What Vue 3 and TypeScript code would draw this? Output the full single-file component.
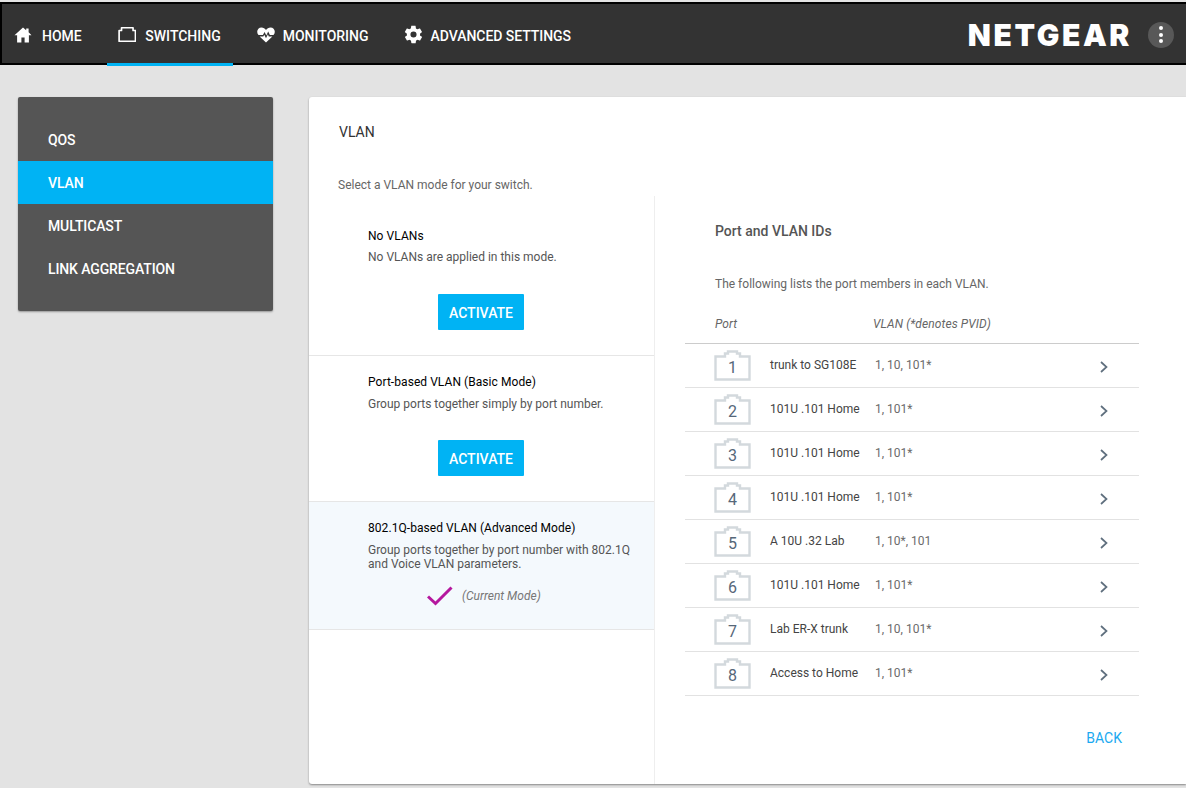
<script setup lang="ts">
interface PortRow { id: number; name: string; vlans: string }
const ports: PortRow[] = [
  { id: 1, name: 'trunk to SG108E', vlans: '1, 10, 101*' },
  { id: 2, name: '101U .101 Home', vlans: '1, 101*' },
  { id: 3, name: '101U .101 Home', vlans: '1, 101*' },
  { id: 4, name: '101U .101 Home', vlans: '1, 101*' },
  { id: 5, name: 'A 10U .32 Lab', vlans: '1, 10*, 101' },
  { id: 6, name: '101U .101 Home', vlans: '1, 101*' },
  { id: 7, name: 'Lab ER-X trunk', vlans: '1, 10, 101*' },
  { id: 8, name: 'Access to Home', vlans: '1, 101*' },
]
const side = ['QOS', 'VLAN', 'MULTICAST', 'LINK AGGREGATION']
</script>

<template>
  <div class="page">
    <header class="top">
      <nav class="nav">
        <a class="tab home">
          <svg class="i-home" width="18" height="16" viewBox="0 0 18 16"><path fill="#fff" d="M9 .5 .5 8.200h2.600V15.500h4.300v-5h3.200v5h4.300V8.200h2.600L14.600 5.300V1.500h-2.400v1.700z" /></svg>
          HOME
        </a>
        <a class="tab active">
          <svg class="i-switch" width="20" height="17" viewBox="0 0 20 17"><path fill="none" stroke="#fff" stroke-width="1.800" stroke-linejoin="round" d="M1.200 15.800V4.200h2.600V1.200h12.400v3h2.600V15.800z" /></svg>
          SWITCHING
        </a>
        <a class="tab mon">
          <svg class="i-heart" width="18" height="16" viewBox="0 0 18 16"><path fill="#fff" d="M9 15.600 2.600 9.400h3.700l1-1.700 1.700 3.600 1.900-4 .9 2.100h3.600zM1.500 8.100C.6 7.100.2 6 .2 4.800.2 2.400 2 .4 4.500.4 6.300.4 8 1.300 9 2.900 10 1.300 11.700.4 13.500.4c2.500 0 4.300 2 4.300 4.400 0 1.200-.4 2.300-1.300 3.300h-3.600l-1.700-3.600-1.900 4-1.700-3.600-1.700 3.200z" /></svg>
          MONITORING
        </a>
        <a class="tab adv">
          <svg class="i-gear" width="21" height="21" viewBox="0 0 24 24"><path fill="#fff" d="M19.400 13c.1-.3.1-.7.1-1s0-.7-.1-1l2.100-1.600c.2-.2.2-.4.100-.6l-2-3.500c-.1-.2-.4-.3-.6-.2l-2.500 1c-.5-.4-1.100-.7-1.700-1l-.4-2.600c0-.3-.2-.5-.5-.5h-4c-.3 0-.5.2-.5.400l-.4 2.700c-.6.2-1.200.6-1.700 1l-2.500-1c-.2-.1-.5 0-.6.2l-2 3.500c-.1.200-.1.400.1.600L4.500 11c0 .3-.1.700-.1 1s0 .7.1 1l-2.100 1.600c-.2.200-.2.400-.1.600l2 3.500c.1.200.4.300.6.200l2.500-1c.5.400 1.100.7 1.700 1l.4 2.600c0 .3.200.5.500.5h4c.3 0 .5-.2.500-.4l.4-2.700c.6-.2 1.200-.6 1.700-1l2.500 1c.2.100.5 0 .6-.2l2-3.500c.1-.2.100-.4-.1-.6zM12 15.500a3.500 3.500 0 1 1 0-7 3.500 3.500 0 0 1 0 7z" /></svg>
          ADVANCED SETTINGS
        </a>
      </nav>
      <div class="brand">
        <span class="logo">NETGEAR</span>
        <span class="more"><i></i><i></i><i></i></span>
      </div>
    </header>

    <div class="body">
      <aside class="side">
        <a v-for="s in side" :key="s" class="side-item" :class="{ on: s === 'VLAN' }">{{ s }}</a>
      </aside>

      <main class="panel">
        <h1 class="title">VLAN</h1>
        <p class="lead">Select a VLAN mode for your switch.</p>
        <div class="cols">
          <section class="modes">
            <div class="mode m1">
              <h2>No VLANs</h2>
              <p>No VLANs are applied in this mode.</p>
              <button class="btn">ACTIVATE</button>
            </div>
            <div class="mode m2">
              <h2>Port-based VLAN (Basic Mode)</h2>
              <p>Group ports together simply by port number.</p>
              <button class="btn">ACTIVATE</button>
            </div>
            <div class="mode m3">
              <h2>802.1Q-based VLAN (Advanced Mode)</h2>
              <p>Group ports together by port number with 802.1Q<br />and Voice VLAN parameters.</p>
              <div class="current">
                <svg width="26" height="20" viewBox="0 0 26 20"><path fill="none" stroke="#b5179e" stroke-width="3" d="M1 10.500 8.500 17.500 24.500 1.500" /></svg>
                <em>(Current Mode)</em>
              </div>
            </div>
          </section>

          <section class="ports">
            <h2 class="ports-title">Port and VLAN IDs</h2>
            <p class="ports-lead">The following lists the port members in each VLAN.</p>
            <div class="head"><em class="h1">Port</em><em class="h2">VLAN (*denotes PVID)</em></div>
            <div v-for="p in ports" :key="p.id" class="row">
              <span class="jack">
                <svg width="37" height="31" viewBox="0 0 37 31"><path fill="none" stroke="#d3d9dd" stroke-width="2.400" d="M1.500 29.500V6.500h9.500V3.500h3V1.500h9v2h3v3h9.500V29.500z" /></svg>
                <b>{{ p.id }}</b>
              </span>
              <span class="name">{{ p.name }}</span>
              <span class="vl">{{ p.vlans }}</span>
              <svg class="chev" width="10" height="14" viewBox="0 0 10 14"><path fill="none" stroke="#5f6f7e" stroke-width="1.700" d="M2 2l5.500 5L2 12" /></svg>
            </div>
            <div class="foot"><a class="back">BACK</a></div>
          </section>
        </div>
      </main>
    </div>
  </div>
</template>

<style>
html, body { margin: 0; background: #e3e3e3; }
</style>

<style scoped>
.page { width: 1186px; height: 788px; overflow: hidden; background: #e3e3e3; font-family: Roboto, "Liberation Sans", sans-serif; }
.top { box-sizing: border-box; height: 63px; margin-top: 2px; background: #333; border: 2px solid #000; border-right: 0; display: flex; justify-content: space-between; }
.nav { display: flex; padding-left: 12px; }
.tab { box-sizing: border-box; height: 62px; display: flex; align-items: center; gap: 9px; color: #fff; font-size: 14px; font-weight: 500; padding: 2px 12px 0 12px; }
.tab.home { padding: 2px 13px 0 0; margin-right: 12px; gap: 10px; }
.tab.active { border-bottom: 3px solid #00b3f4; padding: 5px 12px 0 11px; width: 126px; margin-right: 12px; }
.tab.mon { gap: 8px; margin-right: 11px; }
.tab.adv { gap: 7px; letter-spacing: -.05px; }
.i-home { margin-top: -2px; }
.i-switch { margin-top: -3px; }
.i-heart { margin-top: -3px; }
.i-gear { margin-top: -3px; margin-left: -1px; }
.brand { display: flex; align-items: center; padding: 2px 12px 0 0; gap: 16px; }
.logo { font-family: Inter, "Open Sans", sans-serif; font-weight: 900; font-size: 30px; line-height: 32px; letter-spacing: 2.600px; color: #fff; }
.more { width: 26px; height: 26px; border-radius: 50%; background: #585858; display: flex; flex-direction: column; align-items: center; justify-content: center; gap: 2.500px; }
.more i { width: 4px; height: 4px; border-radius: 50%; background: #fff; display: block; }
.body { display: flex; padding: 32px 0 0 18px; align-items: flex-start; gap: 36px; }
.side { width: 255px; height: 214px; box-sizing: border-box; padding-top: 21px; background: #555; border-radius: 2px; box-shadow: 0 1px 2px rgba(0,0,0,.35); flex: none; }
.side-item { display: block; height: 43px; line-height: 45px; padding-left: 30px; color: #fff; font-size: 14px; font-weight: 500; letter-spacing: -.12px; }
.side-item.on { background: #00b3f4; }
.panel { flex: 1; height: 687px; box-sizing: border-box; background: #fff; border-radius: 3px 0 0 3px; box-shadow: 0 1px 2px rgba(0,0,0,.4); display: flex; flex-direction: column; }
.title { margin: 27px 0 0 30px; font-size: 14px; line-height: 16px; font-weight: 400; color: #333; }
.lead { margin: 37px 0 0 29px; font-size: 12px; line-height: 16px; color: #666; height: 19px; }
.cols { display: flex; flex: 1; min-height: 0; }
.modes { width: 345px; border-right: 1px solid #eee; flex: none; }
.mode { box-sizing: border-box; padding-left: 59px; border-bottom: 1px solid #e6e6e6; }
.m1 { height: 160px; padding-top: 32px; }
.m2 { height: 146px; padding-top: 18px; }
.m3 { height: 128px; padding-top: 18px; background: #f4f9fd; }
.mode h2 { margin: 0; font-size: 12px; line-height: 16px; font-weight: 400; letter-spacing: .06px; color: #000; }
.mode p { margin: 7px 0 0; font-size: 12px; line-height: 14px; color: #555; }
.m1 p { margin-top: 6px; }
.btn { display: block; margin: 29px 0 0 70px; width: 86px; height: 36px; border: 0; border-radius: 1px; background: #00b3f4; color: #fff; font: 500 14px Roboto, sans-serif; padding: 2px 0 0; }
.m1 .btn { margin-top: 30px; }
.current { display: flex; align-items: center; gap: 9px; margin: 15px 0 0 59px; }
.current em { font-size: 12px; color: #777; }
.ports { flex: 1; padding: 0 47px 0 30px; }
.ports-title { margin: 26px 0 0; padding-left: 30px; font-size: 14px; line-height: 18px; font-weight: 500; color: #555; }
.ports-lead { margin: 36px 0 0; padding-left: 30px; font-size: 12px; line-height: 16px; color: #666; }
.head { display: flex; padding-left: 30px; box-sizing: border-box; padding-top: 24px; font-size: 12px; color: #666; line-height: 16px; border-bottom: 1px solid #ccc; height: 52px; }
.h1 { width: 158px; }
.h2 { letter-spacing: .1px; }
.row { position: relative; height: 44px; box-sizing: border-box; border-bottom: 1px solid #e2e2e2; display: flex; align-items: center; font-size: 12px; padding-left: 29px; }
.jack { position: relative; width: 37px; height: 31px; flex: none; }
.jack svg { display: block; }
.jack b { position: absolute; left: 0; right: 0; top: 8px; text-align: center; font-weight: 400; font-size: 16px; line-height: 20px; color: #566779; }
.name { width: 105px; margin-left: 19px; color: #444; margin-top: -1px; }
.vl { color: #6b6b6b; margin-top: -1px; }
.chev { position: absolute; left: 414px; top: 16px; }
.foot { display: flex; justify-content: flex-end; padding-top: 34px; }
.back { color: #1aa9f0; font-size: 14px; line-height: 16px; margin-right: 17px; }
</style>
